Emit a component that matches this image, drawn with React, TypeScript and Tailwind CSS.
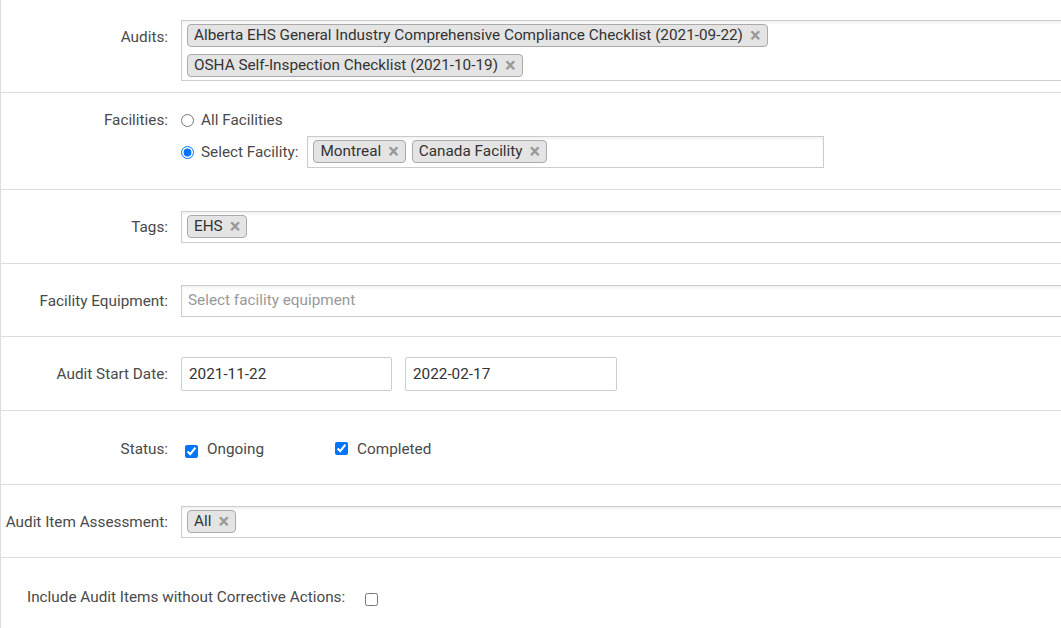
import React from 'react';

const Tag: React.FC<{ text: string }> = ({ text }) => (
  <span className="inline-flex items-center h-[23px] pl-[6px] pr-[6px] gap-[7px] bg-[#e4e4e4] border border-[#aaa] rounded-[4px] text-[15.3px] text-[#333] leading-none whitespace-nowrap">
    <span>{text}</span>
    <span className="text-[#999] font-bold text-[20px] leading-none mt-[-1px]">×</span>
  </span>
);

const MultiBox: React.FC<{ children?: React.ReactNode; className?: string }> = ({ children, className }) => (
  <div
    className={`flex flex-wrap items-start gap-x-[6px] gap-y-[7px] border border-[#ccc] bg-white pl-[5px] pr-[5px] pt-[3px] pb-[4px] min-h-[32px] shadow-[inset_0_2px_3px_rgba(0,0,0,0.06)] ${className ?? ''}`}
  >
    {children}
  </div>
);

const Row: React.FC<{ label: string; children: React.ReactNode; className?: string; labelClass?: string }> = ({
  label,
  children,
  className,
  labelClass,
}) => (
  <div className={`flex border-b border-[#ddd] ${className ?? ''}`}>
    <div className={`w-[167px] shrink-0 text-right text-[15.3px] text-[#4a4a4a] whitespace-nowrap ${labelClass ?? ''}`}>{label}</div>
    <div className="ml-[13px] flex-1">{children}</div>
  </div>
);

export default function App() {
  return (
    <div className="w-[1061px] h-[628px] overflow-hidden bg-white" style={{ fontFamily: 'Roboto, "Liberation Sans", sans-serif' }}>
      <div className="w-[1240px] border-l border-[#ddd] min-h-[628px]">
        <Row label="Audits:" className="h-[93px] pt-[20px]" labelClass="pt-[6px]">
          <div className="flex flex-col items-start gap-[7px] border border-[#ccc] bg-white pl-[5px] pr-[5px] pt-[3px] h-[61px] shadow-[inset_0_2px_3px_rgba(0,0,0,0.06)]">
            <Tag text="Alberta EHS General Industry Comprehensive Compliance Checklist (2021-09-22)" />
            <Tag text="OSHA Self-Inspection Checklist (2021-10-19)" />
          </div>
        </Row>

        <Row label="Facilities:" className="h-[97px] pt-[18px]" labelClass="leading-[18px]">
          <div className="flex flex-col">
            <label className="flex items-center h-[18px] text-[15.3px] text-[#4a4a4a]">
              <input type="radio" name="fac" readOnly className="m-0 w-[13px] h-[13px]" />
              <span className="ml-[7px]">All Facilities</span>
            </label>
            <div className="flex items-center mt-[7px]">
              <input type="radio" name="fac" readOnly defaultChecked className="m-0 w-[13px] h-[13px]" />
              <span className="ml-[7px] text-[15.3px] text-[#4a4a4a]">Select Facility:</span>
              <MultiBox className="ml-[9px] w-[517px] h-[32px]">
                <Tag text="Montreal" />
                <Tag text="Canada Facility" />
              </MultiBox>
            </div>
          </div>
        </Row>

        <Row label="Tags:" className="h-[74px] pt-[21px]" labelClass="leading-[32px]">
          <MultiBox className="h-[32px]">
            <Tag text="EHS" />
          </MultiBox>
        </Row>

        <Row label="Facility Equipment:" className="h-[73px] pt-[21px]" labelClass="leading-[32px]">
          <MultiBox className="h-[32px] items-center">
            <span className="pl-[1px] text-[15.3px] text-[#999] leading-[23px]">Select facility equipment</span>
          </MultiBox>
        </Row>

        <Row label="Audit Start Date:" className="h-[74px] pt-[20px]" labelClass="leading-[34px]">
          <div className="flex gap-[13px]">
            <div className="w-[211px] h-[34px] border border-[#ccc] rounded-[2px] px-[7px] flex items-center text-[15.3px] text-[#333]">
              2021-11-22
            </div>
            <div className="w-[212px] h-[34px] border border-[#ccc] rounded-[2px] px-[7px] flex items-center text-[15.3px] text-[#333]">
              2022-02-17
            </div>
          </div>
        </Row>

        <Row label="Status:" className="h-[74px] pt-[28px]" labelClass="leading-[20px]">
          <div className="flex items-center h-[20px] text-[15.3px] text-[#4a4a4a]">
            <input type="checkbox" readOnly defaultChecked className="m-0 ml-[4px] mt-[5px] w-[13px] h-[13px]" />
            <span className="ml-[9px]">Ongoing</span>
            <input type="checkbox" readOnly defaultChecked className="m-0 ml-[71px] mt-[-1px] w-[13px] h-[13px]" />
            <span className="ml-[9px]">Completed</span>
          </div>
        </Row>

        <Row label="Audit Item Assessment:" className="h-[73px] pt-[21px]" labelClass="leading-[32px]">
          <MultiBox className="h-[32px]">
            <Tag text="All" />
          </MultiBox>
        </Row>

        <div className="flex items-center pt-[28px] pl-[26px] text-[15.3px] text-[#4a4a4a]">
          <span>Include Audit Items without Corrective Actions:</span>
          <input type="checkbox" readOnly className="m-0 ml-[20px] mt-[5px] w-[13px] h-[13px]" />
        </div>
      </div>
    </div>
  );
}
